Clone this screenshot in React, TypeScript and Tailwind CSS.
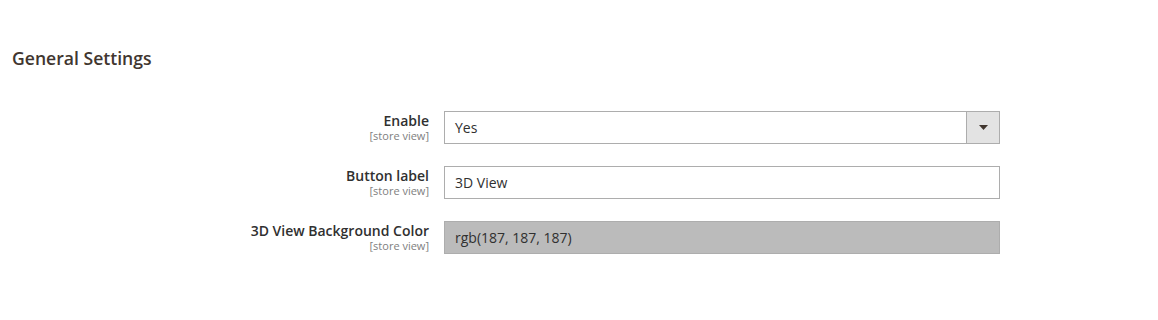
const font = { fontFamily: '"Open Sans", "Noto Sans", Arial, sans-serif' };

type Field = {
  label: string;
  scope: string;
  kind: 'select' | 'text' | 'color';
  value: string;
};

const fields: Field[] = [
  { label: 'Enable', scope: '[store view]', kind: 'select', value: 'Yes' },
  { label: 'Button label', scope: '[store view]', kind: 'text', value: '3D View' },
  { label: '3D View Background Color', scope: '[store view]', kind: 'color', value: 'rgb(187, 187, 187)' },
];

function Control({ field }: { field: Field }) {
  if (field.kind === 'select') {
    return (
      <div className="flex h-[33px] w-[556px] border border-[#adadad] bg-white">
        <div className="flex-1 px-[10px] text-[14px] leading-[31px] text-[#303030]">{field.value}</div>
        <div className="flex w-[33px] items-center justify-center border-l border-[#adadad] bg-[#e3e3e3]">
          <svg width="9" height="5" viewBox="0 0 9 5">
            <path d="M0 0h9L4.5 5z" fill="#41362f" />
          </svg>
        </div>
      </div>
    );
  }
  const bg = field.kind === 'color' ? 'bg-[#bbbbbb]' : 'bg-white';
  return (
    <div className={`h-[33px] w-[556px] border border-[#adadad] px-[10px] text-[14px] leading-[31px] text-[#303030] ${bg}`}>
      {field.value}
    </div>
  );
}

export default function App() {
  return (
    <div className="min-h-[320px] w-full bg-white pl-3" style={font}>
      <h2 className="pt-[46px] text-[17.6px] font-semibold leading-[24px] text-[#41362f]">General Settings</h2>
      <div className="mt-[41px] flex flex-col gap-[22px]">
        {fields.map((f) => (
          <div key={f.label} className="flex gap-[15px]">
            <div className="flex w-[417px] flex-col items-end text-right">
              <span className="text-[14px] font-semibold leading-[19px] text-[#303030]">{f.label}</span>
              <span className="text-[11px] leading-[12px] text-[#808080]">{f.scope}</span>
            </div>
            <Control field={f} />
          </div>
        ))}
      </div>
    </div>
  );
}
